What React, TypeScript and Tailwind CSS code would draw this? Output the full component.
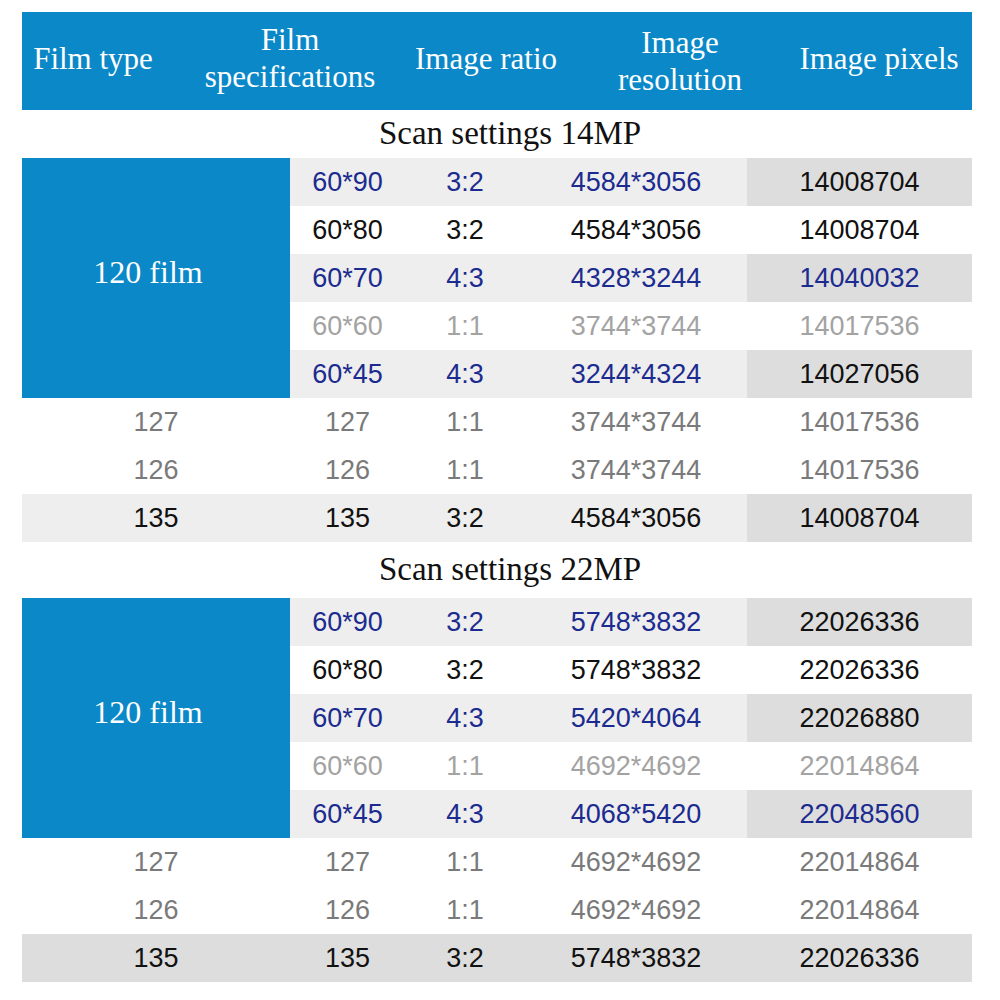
import React from 'react';

type Tone = 'blue' | 'black' | 'light' | 'gray';

interface Row {
  cells: [string, string, string, string];
  tones: [Tone, Tone, Tone, Tone];
  bg: 'gray' | 'white';
}

interface Section {
  title: string;
  rows: Row[];
  tail: { cells: string[]; tone: Tone; bg: 'white' | 'split' | 'full' }[];
}

const toneClass: Record<Tone, string> = {
  blue: 'text-[#1c2b8f]',
  black: 'text-[#111111]',
  light: 'text-[#a3a3a3]',
  gray: 'text-[#7a7a7a]',
};

const sections: Section[] = [
  {
    title: 'Scan settings 14MP',
    rows: [
      { cells: ['60*90', '3:2', '4584*3056', '14008704'], tones: ['blue', 'blue', 'blue', 'black'], bg: 'gray' },
      { cells: ['60*80', '3:2', '4584*3056', '14008704'], tones: ['black', 'black', 'black', 'black'], bg: 'white' },
      { cells: ['60*70', '4:3', '4328*3244', '14040032'], tones: ['blue', 'blue', 'blue', 'blue'], bg: 'gray' },
      { cells: ['60*60', '1:1', '3744*3744', '14017536'], tones: ['light', 'light', 'light', 'light'], bg: 'white' },
      { cells: ['60*45', '4:3', '3244*4324', '14027056'], tones: ['blue', 'blue', 'blue', 'black'], bg: 'gray' },
    ],
    tail: [
      { cells: ['127', '127', '1:1', '3744*3744', '14017536'], tone: 'gray', bg: 'white' },
      { cells: ['126', '126', '1:1', '3744*3744', '14017536'], tone: 'gray', bg: 'white' },
      { cells: ['135', '135', '3:2', '4584*3056', '14008704'], tone: 'black', bg: 'split' },
    ],
  },
  {
    title: 'Scan settings 22MP',
    rows: [
      { cells: ['60*90', '3:2', '5748*3832', '22026336'], tones: ['blue', 'blue', 'blue', 'black'], bg: 'gray' },
      { cells: ['60*80', '3:2', '5748*3832', '22026336'], tones: ['black', 'black', 'black', 'black'], bg: 'white' },
      { cells: ['60*70', '4:3', '5420*4064', '22026880'], tones: ['blue', 'blue', 'blue', 'black'], bg: 'gray' },
      { cells: ['60*60', '1:1', '4692*4692', '22014864'], tones: ['light', 'light', 'light', 'light'], bg: 'white' },
      { cells: ['60*45', '4:3', '4068*5420', '22048560'], tones: ['blue', 'blue', 'blue', 'blue'], bg: 'gray' },
    ],
    tail: [
      { cells: ['127', '127', '1:1', '4692*4692', '22014864'], tone: 'gray', bg: 'white' },
      { cells: ['126', '126', '1:1', '4692*4692', '22014864'], tone: 'gray', bg: 'white' },
      { cells: ['135', '135', '3:2', '5748*3832', '22026336'], tone: 'black', bg: 'full' },
    ],
  },
];

const serif = "font-['Liberation_Serif','Times_New_Roman',serif]";
const sans = "font-['Liberation_Sans',Arial,sans-serif]";

const Header: React.FC = () => (
  <div className={`flex h-[98px] items-center bg-[#0a88c8] pb-[6px] text-[31px] leading-[37px] text-white ${serif}`}>
    <div className="w-[142px] shrink-0 text-center whitespace-nowrap">Film type</div>
    <div className="w-[252px] shrink-0 text-center">Film<br />specifications</div>
    <div className="flex w-[140px] shrink-0 justify-center whitespace-nowrap">Image ratio</div>
    <div className="w-[248px] shrink-0 text-center pt-[6px]">Image<br />resolution</div>
    <div className="flex min-w-0 flex-1 justify-center pr-[18px] whitespace-nowrap">Image pixels</div>
  </div>
);

const SectionBlock: React.FC<{ section: Section; titleH: string }> = ({ section, titleH }) => (
  <div>
    <div className={`flex items-center justify-center pl-[26px] text-[33px] text-[#111111] ${serif} ${titleH}`}>
      {section.title}
    </div>
    <div className={`grid grid-cols-[268px_115px_120px_222px_1fr] text-[27px] ${sans}`}>
      <div className={`row-span-5 flex items-center justify-center bg-[#0a88c8] pr-4 pb-3 text-[32px] text-white ${serif}`}>
        120 film
      </div>
      {section.rows.map((row, i) => {
        const light = row.bg === 'gray' ? 'bg-[#eeeeee]' : 'bg-white';
        const dark = row.bg === 'gray' ? 'bg-[#dddddd]' : 'bg-white';
        return (
          <React.Fragment key={i}>
            {row.cells.map((c, j) => (
              <div
                key={j}
                className={`flex h-[48px] items-center justify-center ${j === 3 ? dark : light} ${toneClass[row.tones[j]]}`}
              >
                {c}
              </div>
            ))}
          </React.Fragment>
        );
      })}
      {section.tail.map((row, i) => (
        <React.Fragment key={`t${i}`}>
          {row.cells.map((c, j) => {
            let bg = 'bg-white';
            if (row.bg === 'full') bg = 'bg-[#dddddd]';
            if (row.bg === 'split') bg = j === 4 ? 'bg-[#dddddd]' : 'bg-[#eeeeee]';
            return (
              <div
                key={j}
                className={`flex h-[48px] items-center justify-center ${bg} ${toneClass[row.tone]}`}
              >
                {c}
              </div>
            );
          })}
        </React.Fragment>
      ))}
    </div>
  </div>
);

export default function App() {
  return (
    <div className="h-[1000px] w-[1000px] bg-white">
      <div className="ml-[22px] w-[950px] pt-[12px]">
        <Header />
        <SectionBlock section={sections[0]} titleH="h-[48px]" />
        <SectionBlock section={sections[1]} titleH="h-[56px]" />
      </div>
    </div>
  );
}
